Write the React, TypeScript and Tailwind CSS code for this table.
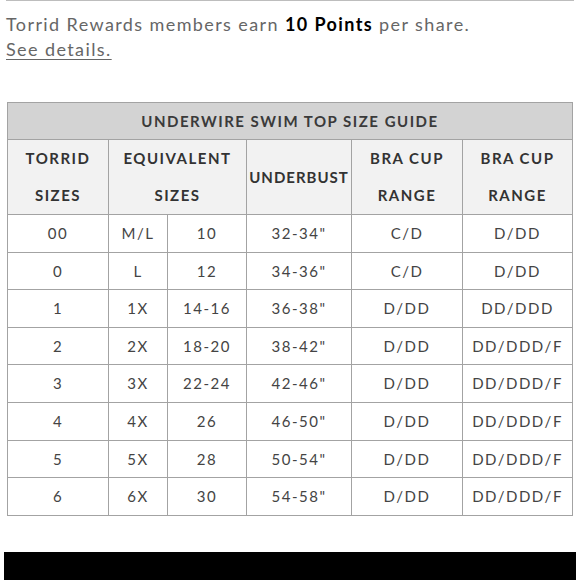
const rows = [
  ["00", "M/L", "10", "32-34\"", "C/D", "D/DD"],
  ["0", "L", "12", "34-36\"", "C/D", "D/DD"],
  ["1", "1X", "14-16", "36-38\"", "D/DD", "DD/DDD"],
  ["2", "2X", "18-20", "38-42\"", "D/DD", "DD/DDD/F"],
  ["3", "3X", "22-24", "42-46\"", "D/DD", "DD/DDD/F"],
  ["4", "4X", "26", "46-50\"", "D/DD", "DD/DDD/F"],
  ["5", "5X", "28", "50-54\"", "D/DD", "DD/DDD/F"],
  ["6", "6X", "30", "54-58\"", "D/DD", "DD/DDD/F"],
];

const th = "border border-[#a3a3a3] bg-[#f2f2f2] font-bold text-[#333] text-[15px] tracking-[1.5px] leading-[37px] p-0 text-center align-middle";
const td = "border border-[#a3a3a3] text-[#444] text-[15px] tracking-[1.5px] h-[37.6px] p-0 text-center align-middle";

export default function App() {
  return (
    <div className="w-[580px] h-[580px] bg-white overflow-hidden font-['Lato',sans-serif]">
      <div className="mx-[6px] border-t border-[#bdbdbd]" />
      <div className="px-[6px] pt-[11px] text-[18px] leading-[25px] tracking-[1.4px] text-[#666]">
        <p>
          Torrid Rewards members earn <span className="font-bold text-black">10 Points</span> per share.
        </p>
        <a className="underline underline-offset-[3px]">See details.</a>
      </div>

      <table className="mt-[40px] ml-[7px] w-[565px] border-collapse table-fixed">
        <colgroup>
          <col className="w-[101px]" />
          <col className="w-[59px]" />
          <col className="w-[79px]" />
          <col className="w-[105px]" />
          <col className="w-[111px]" />
          <col className="w-[110px]" />
        </colgroup>
        <thead>
          <tr>
            <th colSpan={6} className="border border-[#a3a3a3] bg-[#d3d3d3] h-[37px] p-0 text-center font-bold text-[#3a3a3a] text-[15px] tracking-[1.5px]">
              UNDERWIRE SWIM TOP SIZE GUIDE
            </th>
          </tr>
          <tr className="h-[75px]">
            <th className={th}>TORRID<br />SIZES</th>
            <th colSpan={2} className={th}>EQUIVALENT<br />SIZES</th>
            <th className={th + " tracking-[1px]"}>UNDERBUST</th>
            <th className={th}>BRA CUP<br />RANGE</th>
            <th className={th}>BRA CUP<br />RANGE</th>
          </tr>
        </thead>
        <tbody>
          {rows.map((r) => (
            <tr key={r[0]}>
              {r.map((c, i) => (
                <td key={i} className={td}>{c}</td>
              ))}
            </tr>
          ))}
        </tbody>
      </table>

      <div className="mt-[36px] mx-[4px] h-[40px] bg-black" />
    </div>
  );
}
